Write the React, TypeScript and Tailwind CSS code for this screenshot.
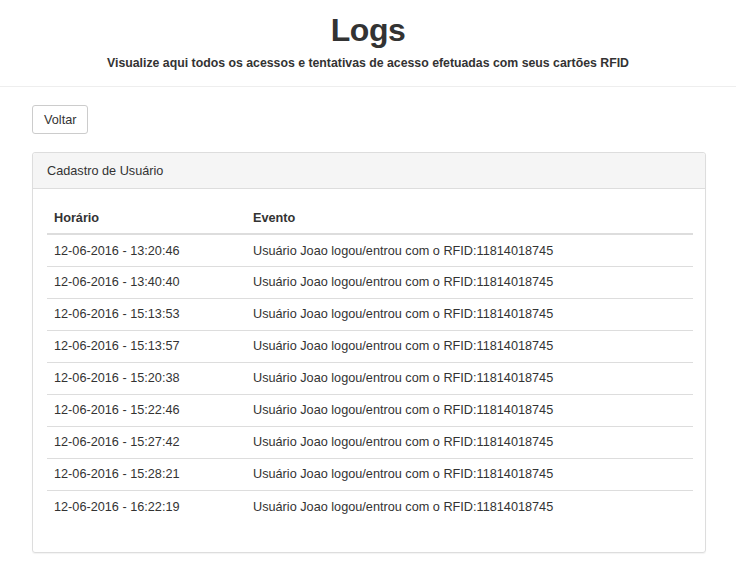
import React from "react";

const rows = [
  "12-06-2016 - 13:20:46",
  "12-06-2016 - 13:40:40",
  "12-06-2016 - 15:13:53",
  "12-06-2016 - 15:13:57",
  "12-06-2016 - 15:20:38",
  "12-06-2016 - 15:22:46",
  "12-06-2016 - 15:27:42",
  "12-06-2016 - 15:28:21",
  "12-06-2016 - 16:22:19",
];

export default function App() {
  return (
    <div
      className="min-h-[569px] bg-white text-[#333]"
      style={{ fontFamily: '"Liberation Sans", Arial, sans-serif' }}
    >
      <header className="border-b border-[#eee] text-center h-[87px] flex flex-col items-center">
        <h1 className="text-[32px] leading-[40px] font-bold mt-[10px] tracking-[-0.5px]">Logs</h1>
        <p className="text-[12.3px] leading-[16px] font-bold mt-[5px]">
          Visualize aqui todos os acessos e tentativas de acesso efetuadas com seus cartões RFID
        </p>
      </header>
      <div className="pl-[32px] pr-[30px] pt-[18px]">
        <button className="h-[29px] px-[11px] border border-[#ccc] rounded-[3px] bg-white text-[12.7px] leading-[16px]">
          Voltar
        </button>
        <div className="mt-[18px] border border-[#ddd] rounded-[3px] shadow-[0_1px_1px_rgba(0,0,0,0.05)] h-[401px]">
          <div className="h-[36px] bg-[#f5f5f5] border-b border-[#ddd] flex items-center px-[14px] pt-[2px] text-[12.7px] rounded-t-[3px]">
            Cadastro de Usuário
          </div>
          <div className="pl-[14px] pr-[12px] pt-[15px]">
            <table className="w-full text-[12.7px] border-collapse">
              <thead>
                <tr className="border-b-2 border-[#ddd]">
                  <th className="text-left font-bold h-[30px] px-[7px] pt-[1px] w-[199px]">Horário</th>
                  <th className="text-left font-bold h-[30px] px-[7px] pt-[1px]">Evento</th>
                </tr>
              </thead>
              <tbody>
                {rows.map((r, i) => (
                  <tr key={r} className={i > 0 ? "border-t border-[#ddd]" : ""}>
                    <td className="h-[32px] px-[7px] pt-[2px]">{r}</td>
                    <td className="h-[32px] px-[7px] pt-[2px]">Usuário Joao logou/entrou com o RFID:11814018745</td>
                  </tr>
                ))}
              </tbody>
            </table>
          </div>
        </div>
      </div>
    </div>
  );
}
